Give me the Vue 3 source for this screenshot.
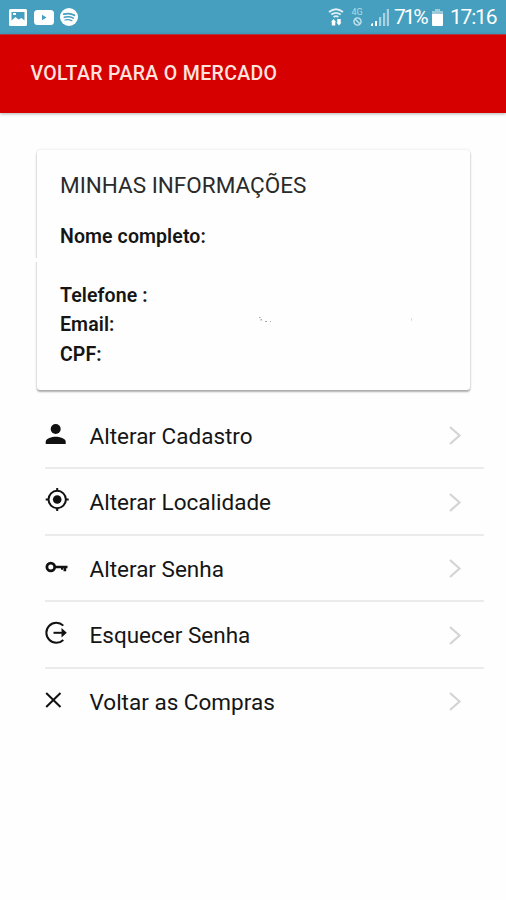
<template>
  <div class="page">
    <div class="status-bar">
      <div class="status-left">
        <svg class="status-picture" viewBox="0 0 18 17">
          <path fill="#fff" fill-rule="evenodd" d="M1.500 0h15Q18 0 18 1.500v14Q18 17 16.500 17h-15Q0 17 0 15.500v-14Q0 0 1.500 0zM2.500 3v8.500l4-3.500 3 2.500 3-1.500 3 2.500V3z" />
          <path fill="#fff" d="M4 4h3v2H4z" />
        </svg>
        <svg class="status-video" viewBox="0 0 20 15">
          <rect width="20" height="15" rx="3.500" fill="#fff" />
          <path d="M8 4.800v5.400l4.500-2.700z" fill="#469fbf" />
        </svg>
        <svg class="status-music" viewBox="0 0 18 18">
          <circle cx="9" cy="9" r="9" fill="#fff" />
          <g fill="none" stroke="#469fbf" stroke-linecap="round">
            <path d="M3.800 6.200q5.500-1.700 10.700 1" stroke-width="1.800" />
            <path d="M4.300 9.200q4.700-1.300 9 .9" stroke-width="1.500" />
            <path d="M4.900 12q3.800-1 7 .8" stroke-width="1.200" />
          </g>
        </svg>
      </div>
      <div class="status-right">
        <svg class="status-wifi" viewBox="0 0 16 18">
          <g fill="none" stroke="#dceff5" stroke-width="1.900">
            <path d="M1 4Q8-1.500 15 4" />
            <path d="M3.300 6.600q4.700-3.500 9.400 0" />
            <path d="M5.600 9q2.400-1.700 4.800 0" />
          </g>
          <path fill="#fff" d="M3 14L5.500 11 8 14H7.300v3.500H3.800V14zM8.500 14.500h.8V11h3.400v3.500h.8l-2.500 3z" />
        </svg>
        <div class="status-network">
          <span>4G</span>
          <svg viewBox="0 0 8 8">
            <circle cx="4" cy="4" r="3.200" fill="none" stroke="#c6e4ee" stroke-width="1.200" />
            <path d="M2 2l4 4" stroke="#c6e4ee" stroke-width="1.200" />
          </svg>
        </div>
        <svg class="status-signal" viewBox="0 0 18 17">
          <path d="M0 17v-2l2-1v3zM4 17v-5h2v5z" fill="#fff" />
          <path d="M8 17V8h2.200v9zM12 17V4h2.200v13zM15.800 17V0H18v17z" fill="#a9d3e1" />
        </svg>
        <span class="status-text battery-text">71%</span>
        <svg class="status-battery" viewBox="0 0 11 17">
          <path d="M3 0h5v2h3v3H0V2h3z" fill="#9ccbdc" />
          <path d="M0 5h11v11q0 1-1 1H1q-1 0-1-1z" fill="#fff" />
        </svg>
        <span class="status-text clock">17:16</span>
      </div>
    </div>

    <header class="header">
      <span>VOLTAR PARA O MERCADO</span>
    </header>

    <section class="card">
      <h2 class="card-title">MINHAS INFORMAÇÕES</h2>
      <p class="field field-name">Nome completo:</p>
      <p class="field">Telefone :</p>
      <p class="field field-email">
        <span class="email-label">Email:</span>
        <svg class="specks" viewBox="0 0 156 6">
          <path d="M0 0h1.500v1H0zM1.500 2h1.500v1.500H1.500zM6 4h2v1H6zM11 4h1v1h-1z" fill="#aaa" />
          <path d="M152 1h1v3h-1z" fill="#ddd" />
        </svg>
      </p>
      <p class="field">CPF:</p>
      <i class="card-notch"></i>
    </section>

    <ul class="menu">
      <li v-for="item in items" :key="item.icon" class="menu-item">
        <div class="menu-icon">
          <svg v-if="item.icon === 'person'" viewBox="0 0 24 24">
            <circle cx="10.700" cy="7" r="5" />
            <path d="M.7 22v-2.300C.7 16.500 6.900 14.800 10.700 14.800S20.700 16.500 20.700 19.700V22z" />
          </svg>
          <svg v-else-if="item.icon === 'locate'" viewBox="0 0 24 24">
            <circle cx="12.200" cy="11.500" r="4.300" />
            <circle cx="12.200" cy="11.500" r="8.700" class="line" />
            <path d="M12.200 0v3M12.200 20v3M.7 11.500h3M20.700 11.500h3" class="line" />
          </svg>
          <svg v-else-if="item.icon === 'key'" viewBox="0 0 24 24">
            <circle cx="5.800" cy="12" r="3.900" class="key-ring" />
            <path d="M9.500 10.800h13v2.500h-1.300v3h-2.700v-3H18v1.500h-2v-1.500H9.500z" />
          </svg>
          <svg v-else-if="item.icon === 'logout'" viewBox="0 0 24 24">
            <path d="M18.300 4.600A10 10 0 1 0 18.300 19" class="line" />
            <path d="M8.500 11.800H19" class="line" />
            <path d="M16.500 7l5.300 4.800-5.300 4.800v-3.500l1.500-1.300-1.500-1.300z" />
          </svg>
          <svg v-else viewBox="0 0 24 24">
            <path d="M1.200 5l14.300 14M15.500 5l-14.300 14" class="line" />
          </svg>
        </div>
        <div class="menu-body">
          <span class="menu-label">{{ item.label }}</span>
          <svg class="chevron" viewBox="0 0 13 19">
            <path d="M1 1l9.500 8.500L1 18" />
          </svg>
        </div>
      </li>
    </ul>
  </div>
</template>

<script setup>
const items = [
  { icon: 'person', label: 'Alterar Cadastro' },
  { icon: 'locate', label: 'Alterar Localidade' },
  { icon: 'key', label: 'Alterar Senha' },
  { icon: 'logout', label: 'Esquecer Senha' },
  { icon: 'close', label: 'Voltar as Compras' }
]
</script>

<style>
body {
  margin: 0;
  background: #fefefe;
}
</style>

<style scoped>
.page {
  width: 506px;
  height: 900px;
  overflow: hidden;
  background: #fefefe;
  color: #151515;
  font-family: Roboto, sans-serif;
}

svg {
  display: block;
  flex-shrink: 0;
}

.status-bar {
  box-sizing: border-box;
  height: 34px;
  padding: 0 10px 0 9px;
  display: flex;
  justify-content: space-between;
  align-items: center;
  background: #469fbf;
  color: #fff;
}

.status-left,
.status-right {
  display: flex;
  align-items: center;
}

.status-picture {
  width: 18px;
  height: 17px;
}

.status-video {
  width: 20px;
  height: 15px;
  margin-left: 7px;
}

.status-music {
  width: 18px;
  height: 18px;
  margin-left: 6px;
}

.status-wifi {
  width: 16px;
  height: 18px;
}

.status-network {
  width: 12px;
  margin-left: 7px;
  display: flex;
  flex-direction: column;
  align-items: center;
  font-size: 9px;
  line-height: 9px;
  color: #b5dae6;
}

.status-network svg {
  width: 9px;
  height: 9px;
}

.status-signal {
  width: 18px;
  height: 17px;
  margin-left: 8px;
}

.status-text {
  font-size: 21px;
  line-height: 36px;
  white-space: nowrap;
}

.battery-text {
  width: 33px;
  margin-left: 5px;
  letter-spacing: -2.2px;
}

.status-battery {
  width: 11px;
  height: 17px;
  margin-left: 5px;
}

.clock {
  width: 46px;
  margin-left: 7px;
  letter-spacing: -1.2px;
}

.header {
  box-sizing: border-box;
  height: 79px;
  padding: 0 0 1px 30.5px;
  display: flex;
  align-items: center;
  background: #d60000;
  border-top: 1px solid #a93a48;
  box-shadow: 0 1px 3px rgba(0, 0, 0, 0.3);
  color: #ffe3df;
  font-size: 19.5px;
  font-weight: 500;
  letter-spacing: 0.35px;
}

.card {
  position: relative;
  box-sizing: border-box;
  width: 433px;
  height: 240px;
  margin: 37px 0 0 37px;
  padding: 20px 23px;
  border-radius: 3px;
  box-shadow: 0 2px 2px rgba(0, 0, 0, 0.3), 0 0 3px rgba(0, 0, 0, 0.12);
  background: #fefefe;
}

.card-title {
  margin: 0;
  font-size: 22.5px;
  font-weight: 400;
  line-height: 31px;
  color: #2a2a2a;
}

.field {
  margin: 0;
  font-size: 19.5px;
  font-weight: 600;
  line-height: 29.5px;
  letter-spacing: 0.1px;
  white-space: nowrap;
}

.field-name {
  margin-top: 20.8px;
  margin-bottom: 29.5px;
}

.field-email {
  display: flex;
  align-items: flex-start;
}

.email-label {
  width: 199px;
}

.specks {
  width: 156px;
  height: 6px;
  margin-top: 7px;
}

/* small break in the left edge of the card */
.card-notch {
  position: absolute;
  left: -4px;
  top: 108px;
  width: 5px;
  height: 4px;
  background: #fefefe;
}

.menu {
  margin: 12.6px 0 0;
  padding: 0 22px 0 45px;
  list-style: none;
}

.menu-item {
  box-sizing: border-box;
  height: 66.5px;
  display: flex;
  align-items: center;
  border-bottom: 2px solid #ebebeb;
}

.menu-item:last-child {
  border-bottom: none;
}

.menu-icon {
  width: 44.5px;
  padding-bottom: 2px;
}

.menu-icon svg {
  width: 24px;
  height: 24px;
  fill: #111;
}

.menu-icon .line {
  fill: none;
  stroke: #111;
  stroke-width: 2;
}

.menu-icon .key-ring {
  fill: none;
  stroke: #111;
  stroke-width: 2.8;
}

.menu-body {
  flex: 1;
  display: flex;
  align-items: center;
  justify-content: space-between;
  padding: 2px 22px 0 0;
}

.menu-item:last-child .menu-icon {
  padding-bottom: 3px;
}

.menu-item:last-child .menu-body {
  padding-top: 0;
}

.menu-label {
  font-size: 22.5px;
  line-height: 30px;
}

.chevron {
  width: 13px;
  height: 19px;
}

.chevron path {
  fill: none;
  stroke: #d4d4d4;
  stroke-width: 2.2;
}
</style>
